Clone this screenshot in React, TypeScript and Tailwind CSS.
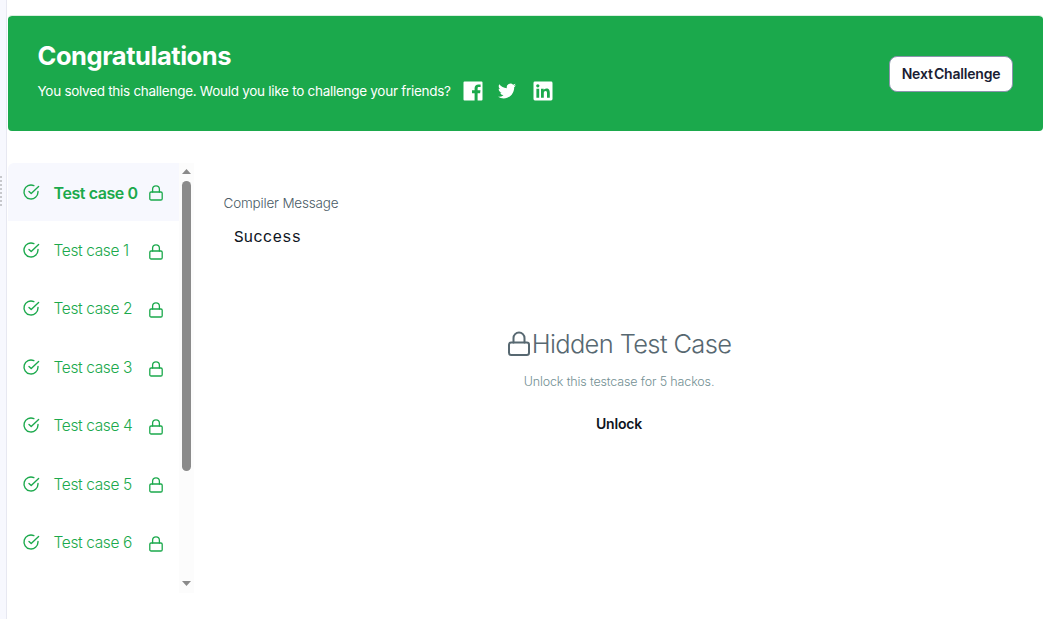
import React from "react";

const FONT = "font-['Inter','Liberation_Sans',sans-serif]";

function CheckIcon() {
  return (
    <svg width="18" height="18" viewBox="0 0 18 18" fill="none" stroke="#1ba94c" strokeWidth="1.4" strokeLinecap="round" strokeLinejoin="round" className="mb-[1px] shrink-0">
      <path d="M16 8.400v.6a7 7 0 1 1-4.150-6.400" />
      <path d="M16.600 3.600 9.200 10.500 7 8.500" />
    </svg>
  );
}

function LockIcon({ width, height, stroke }: { width: number; height: number; stroke: number }) {
  return (
    <svg width={width} height={height} viewBox="0 0 14 16" fill="none" stroke="currentColor" strokeWidth={stroke} strokeLinecap="round" strokeLinejoin="round" className="shrink-0">
      <rect x="0.8" y="7" width="12.4" height="8" rx="1.3" />
      <path d="M3.6 7V4.3a3.4 3.4 0 0 1 6.8 0V7" />
    </svg>
  );
}

function LargeLockIcon() {
  return (
    <svg width="24" height="26" viewBox="0 0 24 26" fill="none" stroke="currentColor" strokeWidth="2" strokeLinecap="round" strokeLinejoin="round" className="shrink-0">
      <rect x="2" y="11.500" width="20" height="12.500" rx="2.200" />
      <path d="M6.500 11.500V7a5.500 5.500 0 0 1 11 0v4.500" />
    </svg>
  );
}

function FacebookIcon() {
  return (
    <svg width="20" height="20" viewBox="0 0 20 20" fill="white">
      <path d="M1.500.5h17a1 1 0 0 1 1 1v17a1 1 0 0 1-1 1h-3.900v-7.300h2.500l.4-2.900h-2.900V7.500c0-.9.3-1.400 1.500-1.400h1.500V3.500c-.3 0-1.200-.1-2.200-.1-2.300 0-3.800 1.300-3.800 3.800v2.100H9v2.900h2.600v7.300H1.500a1 1 0 0 1-1-1v-17a1 1 0 0 1 1-1Z" />
    </svg>
  );
}

function TwitterIcon() {
  return (
    <svg width="18" height="16" viewBox="0 1.500 24 21" fill="white" preserveAspectRatio="none">
      <path d="M23.953 4.570a10 10 0 0 1-2.825.775 4.958 4.958 0 0 0 2.163-2.723c-.951.555-2.005.959-3.127 1.184a4.920 4.920 0 0 0-8.384 4.482C7.690 8.095 4.067 6.130 1.640 3.162a4.822 4.822 0 0 0-.666 2.475c0 1.710.870 3.213 2.188 4.096a4.904 4.904 0 0 1-2.228-.616v.060a4.923 4.923 0 0 0 3.946 4.827 4.996 4.996 0 0 1-2.212.085 4.936 4.936 0 0 0 4.604 3.417 9.867 9.867 0 0 1-6.102 2.105c-.390 0-.779-.023-1.170-.067a13.995 13.995 0 0 0 7.557 2.209c9.053 0 13.998-7.496 13.998-13.985 0-.210 0-.420-.015-.630A9.935 9.935 0 0 0 24 4.590z" />
    </svg>
  );
}

function LinkedInIcon() {
  return (
    <svg width="20" height="20" viewBox="0 0 20 20">
      <rect x="0.500" y="0.500" width="19" height="19" rx="1.400" fill="white" />
      <g fill="#1ba94c">
        <circle cx="4.800" cy="4.800" r="1.650" />
        <path d="M3.400 7.700h2.800v9H3.400zM8 7.700h2.700v1.200c.4-.7 1.300-1.450 2.700-1.450 2.800 0 3.400 1.900 3.400 4.300v4.950H14v-4.400c0-1.050 0-2.400-1.450-2.400S10.800 11 10.800 12.200v4.500H8z" />
      </g>
    </svg>
  );
}

function Banner() {
  return (
    <section className="mt-[15px] mr-px ml-px flex h-[116px] shrink-0 items-center justify-between rounded-[4px] border-t border-[#d9f0e0] bg-[#1ba94c] bg-clip-padding pr-[30px] pl-[29.5px] text-white">
      <div className="h-[115px] pt-[21px]">
        <h1 className="h-[38px] text-[25.5px] leading-[38px] font-bold tracking-[-0.450px] whitespace-nowrap">Congratulations</h1>
        <div className="mt-[6px] flex h-5 items-center">
          <p className="w-[425.5px] text-[13.5px] leading-5 tracking-[-0.280px] whitespace-nowrap">
            <span>You solved this challenge. Would you like to challenge your friends?</span>
          </p>
          <FacebookIcon />
          <span className="ml-[15px]"><TwitterIcon /></span>
          <span className="ml-[17px]"><LinkedInIcon /></span>
        </div>
      </div>
      <button className="h-9 w-[124px] rounded-[8px] border border-[#8b94ad] bg-white text-[14px] font-semibold tracking-[-0.2px] whitespace-nowrap text-[#1a1d33] [word-spacing:-2px]">
        Next Challenge
      </button>
    </section>
  );
}

function TestCaseRow({ index, active }: { index: number; active: boolean }) {
  return (
    <li className={`flex h-[58.4px] items-center pl-[14px] text-[#1ba94c] ${active ? "rounded-tl-[6px] bg-[#f7f8fe]" : ""}`}>
      <CheckIcon />
      <span className={`ml-[13.5px] w-[95.5px] pt-[1px] leading-6 whitespace-nowrap ${active ? "text-[16px] font-semibold tracking-[-0.420px]" : "text-[15.5px] font-light tracking-[-0.370px]"}`}>
        Test case {index}
      </span>
      <span className="pt-[2.5px]"><LockIcon width={14} height={16} stroke={1.3} /></span>
    </li>
  );
}

function Scrollbar() {
  return (
    <div className="flex h-[430px] w-[15px] flex-col items-center bg-[#fcfcfc]">
      <svg width="9" height="18" viewBox="0 0 9 18" className="shrink-0"><path d="M0 11 4.500 6 9 11z" fill="#8a8a8a" /></svg>
      <div className="h-[290px] w-[9px] rounded-full bg-[#8b8b8b]" />
      <svg width="9" height="16" viewBox="0 0 9 16" className="mt-auto shrink-0"><path d="M0 4h9L4.500 9z" fill="#8a8a8a" /></svg>
    </div>
  );
}

export default function App() {
  return (
    <div className={`flex h-[619px] w-[1044px] overflow-hidden bg-white ${FONT}`}>
      <div className="flex w-[7px] shrink-0 flex-col gap-[2px] border-r border-[#e7e8f1] bg-[#f7f8fe] pt-[176px]">
        {Array.from({ length: 8 }, (_, i) => (
          <span key={i} className="h-[2px] w-[2px] bg-[#c7c8cc]" />
        ))}
      </div>
      <main className="flex min-w-0 flex-1 flex-col">
        <Banner />
        <div className="mt-[32px] ml-px flex">
          <ul className="h-[430px] w-[171px] overflow-hidden">
            {[0, 1, 2, 3, 4, 5, 6].map((i) => (
              <TestCaseRow key={i} index={i} active={i === 0} />
            ))}
          </ul>
          <Scrollbar />
          <section className="flex-1 pt-[30px]">
            <h2 className="ml-[29.5px] h-5 text-[13.5px] leading-5 font-light tracking-[-0.180px] text-[#4a5b66]"><span>Compiler Message</span></h2>
            <pre className="mt-[15px] ml-[40px] h-5 font-['Liberation_Mono',monospace] text-[16px] leading-5 text-[#0e141e]">Success</pre>
            <div className="mt-[76px] flex flex-col items-center">
              <div className="flex h-10 items-center text-[#576871]">
                <LargeLockIcon />
                <span className="ml-[1px] text-[25.5px] leading-10 font-light tracking-[-0.640px] whitespace-nowrap">Hidden Test Case</span>
              </div>
              <p className="mt-[8px] text-[12.5px] leading-5 font-light tracking-[-0.140px] text-[#738f93]">Unlock this testcase for 5 hackos.</p>
              <button className="mt-[22px] text-[14px] leading-5 font-semibold tracking-[-0.200px] text-[#0e141e]">Unlock</button>
            </div>
          </section>
        </div>
      </main>
    </div>
  );
}
